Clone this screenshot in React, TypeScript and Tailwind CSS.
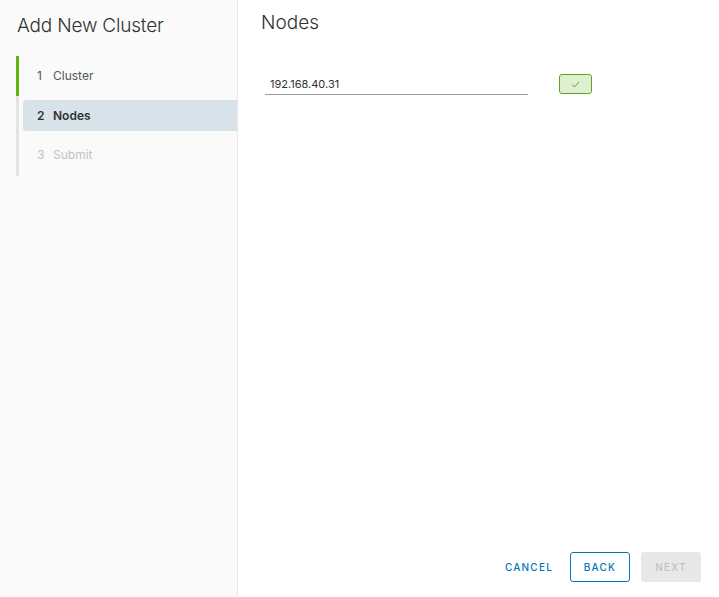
import React from "react";

export default function App() {
  const font = { fontFamily: "Inter, 'Open Sans', sans-serif" };
  return (
    <div className="flex h-[597px] w-[719px] bg-white text-[#313131]" style={font}>
      <div className="flex w-[238px] shrink-0 flex-col border-r border-[#e8e8e8] bg-[#fafafa]">
        <div className="pl-[17px] pt-[13px] text-[19px] font-light leading-[26px] tracking-[-0.01em] text-[#313131]">Add New Cluster</div>
        <div className="relative mt-[17px] ml-[16px] flex flex-col">
          <div className="absolute left-0 top-0 h-[120px] w-[3px] bg-[#e4e4e4]" />
          <div className="absolute left-0 top-0 h-[40px] w-[3px] bg-[#60b515]" />
          <div className="flex h-[40px] items-center pl-[21px] text-[12px] text-[#565656]">
            <span className="w-[16px]">1</span>
            <span>Cluster</span>
          </div>
          <div className="ml-[7px] mt-[4px] flex h-[31px] items-center rounded-l-[3px] bg-[#d8e3e9] pl-[14px] text-[12px] font-semibold text-[#313131]">
            <span className="w-[16px]">2</span>
            <span>Nodes</span>
          </div>
          <div className="flex h-[48px] items-center pl-[21px] text-[12px] text-[#c3c3c3]">
            <span className="w-[16px]">3</span>
            <span>Submit</span>
          </div>
        </div>
      </div>
      <div className="flex flex-1 flex-col">
        <div className="pl-[23px] pt-[10px] text-[19px] font-light leading-[26px] text-[#313131]">Nodes</div>
        <div className="mt-[38px] flex items-center pl-[27px]">
          <div className="flex h-[21px] w-[263px] items-center border-b border-[#9a9a9a] pl-[5px] text-[11px] text-[#313131]">
            192.168.40.31
          </div>
          <div className="ml-[31px] mb-[1px] flex h-[20px] w-[33px] items-center justify-center rounded-[3px] border border-[#62a420] bg-[#dff0d0]">
            <svg width="9" height="7" viewBox="0 0 9 7" fill="none">
              <path d="M1 3.5L3.5 6L8 1" stroke="#62a420" strokeWidth="1" />
            </svg>
          </div>
        </div>
        <div className="flex-1" />
        <div className="flex items-center justify-end pb-[15px] pr-[18px]">
          <button className="h-[30px] px-[4px] text-[10px] font-medium tracking-[0.12em] text-[#0079b8]">CANCEL</button>
          <button className="ml-[13px] h-[30px] w-[60px] rounded-[3px] border border-[#0079b8] text-[10px] font-medium tracking-[0.12em] text-[#0079b8]">BACK</button>
          <button className="ml-[11px] h-[30px] w-[60px] rounded-[3px] bg-[#e8e8e8] text-[10px] font-medium tracking-[0.12em] text-[#c0c0c0]">NEXT</button>
        </div>
      </div>
    </div>
  );
}
